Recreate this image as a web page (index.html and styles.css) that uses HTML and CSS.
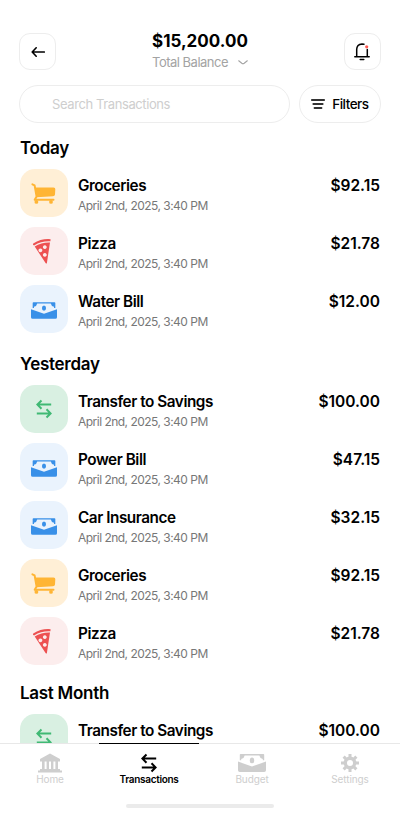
FILE: index.html
```html
<!DOCTYPE html>
<html lang="en">
<head>
<meta charset="utf-8">
<title>Transactions</title>
<link rel="stylesheet" href="styles.css">
</head>
<body>
<svg class="sprite" width="0" height="0" aria-hidden="true">
  <symbol id="cart" viewBox="0 0 26 24">
    <path d="M1.4 2.3 3.6 3.4 5.6 14.5 3.7 17.8H22.5" fill="none" stroke="currentColor" stroke-width="2" stroke-linecap="round" stroke-linejoin="round"/>
    <path d="M4 5.4H22.5Q24.5 5.4 24.3 7.2L24 12.4Q23.8 14 22 14.2L5.6 15.2Z" fill="currentColor"/>
    <circle cx="5.4" cy="19.9" r="1.9" fill="currentColor"/><circle cx="20" cy="19.9" r="1.9" fill="currentColor"/>
  </symbol>
  <symbol id="pizza" viewBox="0 0 20 26">
    <path d="M1.2 5.5Q9.5 .4 18.6 1.2L18.4 3.3Q9.5 2.8 2.1 7.4Q.2 7 1.2 5.5Z" fill="currentColor"/>
    <path fill-rule="evenodd" d="M2.7 8.5Q9.6 4.3 18 4.6L14.9 24.9Q14.6 26.1 13.7 25.2ZM12.8 7.2a1.9 1.9 0 1 0 .01 0ZM8.4 10.4a1.9 1.9 0 1 0 .01 0ZM12.8 15a1.9 1.9 0 1 0 .01 0Z" fill="currentColor"/>
  </symbol>
  <symbol id="cash" viewBox="0 0 28 18">
    <path fill-rule="evenodd" d="M2.6 0H25.4Q26.2 0 26.2 .8V6.3H1.8V.8Q1.8 0 2.6 0ZM6.7 1.5Q6.2 4.4 3.2 5V6.3H24.8V5Q21.8 4.4 21.3 1.5Z" fill="currentColor"/>
    <ellipse cx="14" cy="6.4" rx="2.2" ry="2.9" fill="currentColor"/>
    <path d="M0 7.6 14 12.4 28 7.6V16.2Q28 18 26.2 18H1.8Q0 18 0 16.2Z" fill="currentColor"/>
  </symbol>
  <symbol id="swap" viewBox="0 0 16 20">
    <path d="M15.2 5.6H2M5.5 1.5 1.4 5.6 5.5 9.7M.8 14.4H14M10.5 10.3 14.6 14.4 10.5 18.5" fill="none" stroke="currentColor" stroke-width="2"/>
  </symbol>
</svg>
<div class="screen">
  <header class="header">
    <button class="square" aria-label="Back"><svg width="14" height="12" viewBox="0 0 14 12"><path d="M13.3 6H1.5M5.2 1.8 1.2 6l4 4.2" fill="none" stroke="currentColor" stroke-width="1.6" stroke-linecap="round" stroke-linejoin="round"/></svg></button>
    <div class="balance">
      <div class="total">$15,200.00</div>
      <div class="caption"><span>Total Balance</span><svg width="10" height="5" viewBox="0 0 10 5"><path d="M.7.8 3.8 3.3Q5 4.1 6.2 3.3L9.3.8" fill="none" stroke="currentColor" stroke-width="1.1" stroke-linecap="round"/></svg></div>
    </div>
    <button class="square bell" aria-label="Notifications"><svg width="16" height="18" viewBox="0 0 16 18"><path d="M.8 13.8H15.2M2.7 13.5V6.3Q2.8 1.3 8 .9L10 1.2M13.3 6.5V13.5M6.2 16.6H9.8" fill="none" stroke="currentColor" stroke-width="1.5" stroke-linecap="round"/><circle cx="12.7" cy="3.8" r="1.6" fill="#ff5a52"/></svg></button>
  </header>
  <div class="search-row">
    <div class="search">Search Transactions</div>
    <button class="filters"><svg width="14" height="10" viewBox="0 0 14 10"><path d="M.8 1H13.2M2.3 5H11.7M3.5 9H10.5" fill="none" stroke="#333" stroke-width="1.8" stroke-linecap="round"/></svg><span>Filters</span></button>
  </div>
  <main class="list">
    <section class="group">
      <h2>Today</h2>
      <div class="row"><div class="tile orange"><svg width="26" height="24"><use href="#cart"/></svg></div><div class="info"><div class="name">Groceries</div><div class="date">April 2nd, 2025, 3:40 PM</div></div><div class="amount">$92.15</div></div>
      <div class="row"><div class="tile red"><svg width="20" height="26"><use href="#pizza"/></svg></div><div class="info"><div class="name">Pizza</div><div class="date">April 2nd, 2025, 3:40 PM</div></div><div class="amount">$21.78</div></div>
      <div class="row"><div class="tile blue"><svg width="26" height="17"><use href="#cash"/></svg></div><div class="info"><div class="name">Water Bill</div><div class="date">April 2nd, 2025, 3:40 PM</div></div><div class="amount">$12.00</div></div>
    </section>
    <section class="group">
      <h2>Yesterday</h2>
      <div class="row"><div class="tile green"><svg width="16" height="20"><use href="#swap"/></svg></div><div class="info"><div class="name">Transfer to Savings</div><div class="date">April 2nd, 2025, 3:40 PM</div></div><div class="amount">$100.00</div></div>
      <div class="row"><div class="tile blue"><svg width="26" height="17"><use href="#cash"/></svg></div><div class="info"><div class="name">Power Bill</div><div class="date">April 2nd, 2025, 3:40 PM</div></div><div class="amount">$47.15</div></div>
      <div class="row"><div class="tile blue"><svg width="26" height="17"><use href="#cash"/></svg></div><div class="info"><div class="name">Car Insurance</div><div class="date">April 2nd, 2025, 3:40 PM</div></div><div class="amount">$32.15</div></div>
      <div class="row"><div class="tile orange"><svg width="26" height="24"><use href="#cart"/></svg></div><div class="info"><div class="name">Groceries</div><div class="date">April 2nd, 2025, 3:40 PM</div></div><div class="amount">$92.15</div></div>
      <div class="row"><div class="tile red"><svg width="20" height="26"><use href="#pizza"/></svg></div><div class="info"><div class="name">Pizza</div><div class="date">April 2nd, 2025, 3:40 PM</div></div><div class="amount">$21.78</div></div>
    </section>
    <section class="group last">
      <h2>Last Month</h2>
      <div class="row"><div class="tile green"><svg width="16" height="20"><use href="#swap"/></svg></div><div class="info"><div class="name">Transfer to Savings</div></div><div class="amount">$100.00</div></div>
    </section>
  </main>
  <nav class="nav">
    <div class="tabs">
      <div class="tab home"><svg width="24" height="19" viewBox="0 0 24 19"><path d="M12 0 22 5.6V8H2V5.6ZM4 8H6.6V15.5H4ZM8.6 8H11V15.5H8.6ZM13 8H15.4V15.5H13ZM17.4 8H20V15.5H17.4ZM2 15.5H22V17H24V19H0V17H2Z" fill="currentColor"/></svg><span>Home</span></div>
      <div class="tab active"><svg width="16" height="20"><use href="#swap"/></svg><span>Transactions</span></div>
      <div class="tab budget"><svg width="28" height="18"><use href="#cash"/></svg><span>Budget</span></div>
      <div class="tab settings"><svg width="18" height="18" viewBox="0 0 18 18"><g fill="none" stroke="currentColor"><circle cx="9" cy="9" r="4.7" stroke-width="3.4"/><path d="M9 0V4M9 14V18M0 9H4M14 9H18M2.6 2.6 5.4 5.4M12.6 12.6 15.4 15.4M15.4 2.6 12.6 5.4M5.4 12.6 2.6 15.4" stroke-width="3"/></g></svg><span>Settings</span></div>
    </div>
    <div class="handle"></div>
  </nav>
</div>
</body>
</html>
```
FILE: styles.css
```css
* { box-sizing: border-box; }
body { margin: 0; background: #fff; color: #000; font-family: Inter, "Liberation Sans", sans-serif; }
button { font: inherit; color: inherit; background: #fff; padding: 0; }
svg { display: block; flex: none; }
.sprite { position: absolute; }
.screen { width: 400px; height: 820px; display: flex; flex-direction: column; overflow: hidden; white-space: nowrap; }
.header { display: flex; justify-content: space-between; padding: 30px 19px 0; height: 85px; flex: none; }
.square { width: 37px; height: 37px; margin-top: 3px; border: 1px solid #ededed; border-radius: 11px; display: flex; align-items: center; justify-content: center; }
.bell { padding-right: 2px; }
.total { font-size: 17px; line-height: 22px; font-weight: 700; letter-spacing: 0; }
.balance { width: 96px; }
.caption { display: flex; align-items: center; justify-content: space-between; color: #a3a3a3; font-size: 13px; line-height: 20px; letter-spacing: -0.5px; }
.search-row { display: flex; gap: 9px; height: 38px; padding: 0 19px; flex: none; }
.search { width: 272px; border: 1px solid #ededed; border-radius: 19px; padding-left: 32px; color: #cecece; font-size: 13px; line-height: 37px; letter-spacing: -0.4px; }
.filters { width: 82px; border: 1px solid #ededed; border-radius: 19px; display: flex; align-items: center; gap: 7px; padding-left: 11px; font-size: 13.5px; font-weight: 500; letter-spacing: -0.5px; }
.list { flex: 1; min-height: 0; overflow: hidden; padding: 14px 20px 0; }
.group { display: flex; flex-direction: column; gap: 10px; margin-bottom: 20px; }
.group.last { margin-top: -3px; }
h2 { margin: 0; height: 22px; font-size: 17px; line-height: 22px; font-weight: 600; letter-spacing: -0.28px; }
.row { display: flex; height: 48px; flex: none; }
.tile { width: 48px; height: 48px; border-radius: 15px; display: flex; align-items: center; justify-content: center; }
.orange { background: #ffefd6; color: #ffb534; padding-top: 2px; }
.red { background: #fceded; color: #ed5151; padding-right: 4px; }
.blue { background: #eaf3fd; color: #3990e8; padding-top: 2px; }
.green { background: #d9f0e2; color: #40b974; }
.info { flex: 1; padding-left: 10px; }
.name { margin-top: 7px; font-size: 15.3px; line-height: 20px; font-weight: 600; letter-spacing: -0.45px; }
.date { margin-top: 1px; font-size: 12px; line-height: 18px; color: #777; letter-spacing: -0.52px; }
.amount { margin-top: 7px; font-size: 15.5px; line-height: 20px; font-weight: 600; letter-spacing: 0; }
.nav { height: 77px; flex: none; border-top: 1px solid #e8e8e8; background: #fff; }
.tabs { display: flex; height: 60px; margin-top: -1px; padding-left: 0; }
.tab { width: 100px; display: flex; flex-direction: column; align-items: center; color: #cecece; font-size: 10px; line-height: 12px; letter-spacing: -0.1px; border-top: 1px solid transparent; }
.tab svg { height: 20px; margin-top: 9px; }
.tab span { margin-top: 0; }
.active { margin-left: -1px; margin-right: 3px; color: #000; border-color: #000; font-weight: 600; letter-spacing: -0.3px; }
.settings { margin-left: -2px; }
.handle { width: 148px; height: 4px; margin: 1px auto 0; border-radius: 2px; background: #ebebeb; }
```
